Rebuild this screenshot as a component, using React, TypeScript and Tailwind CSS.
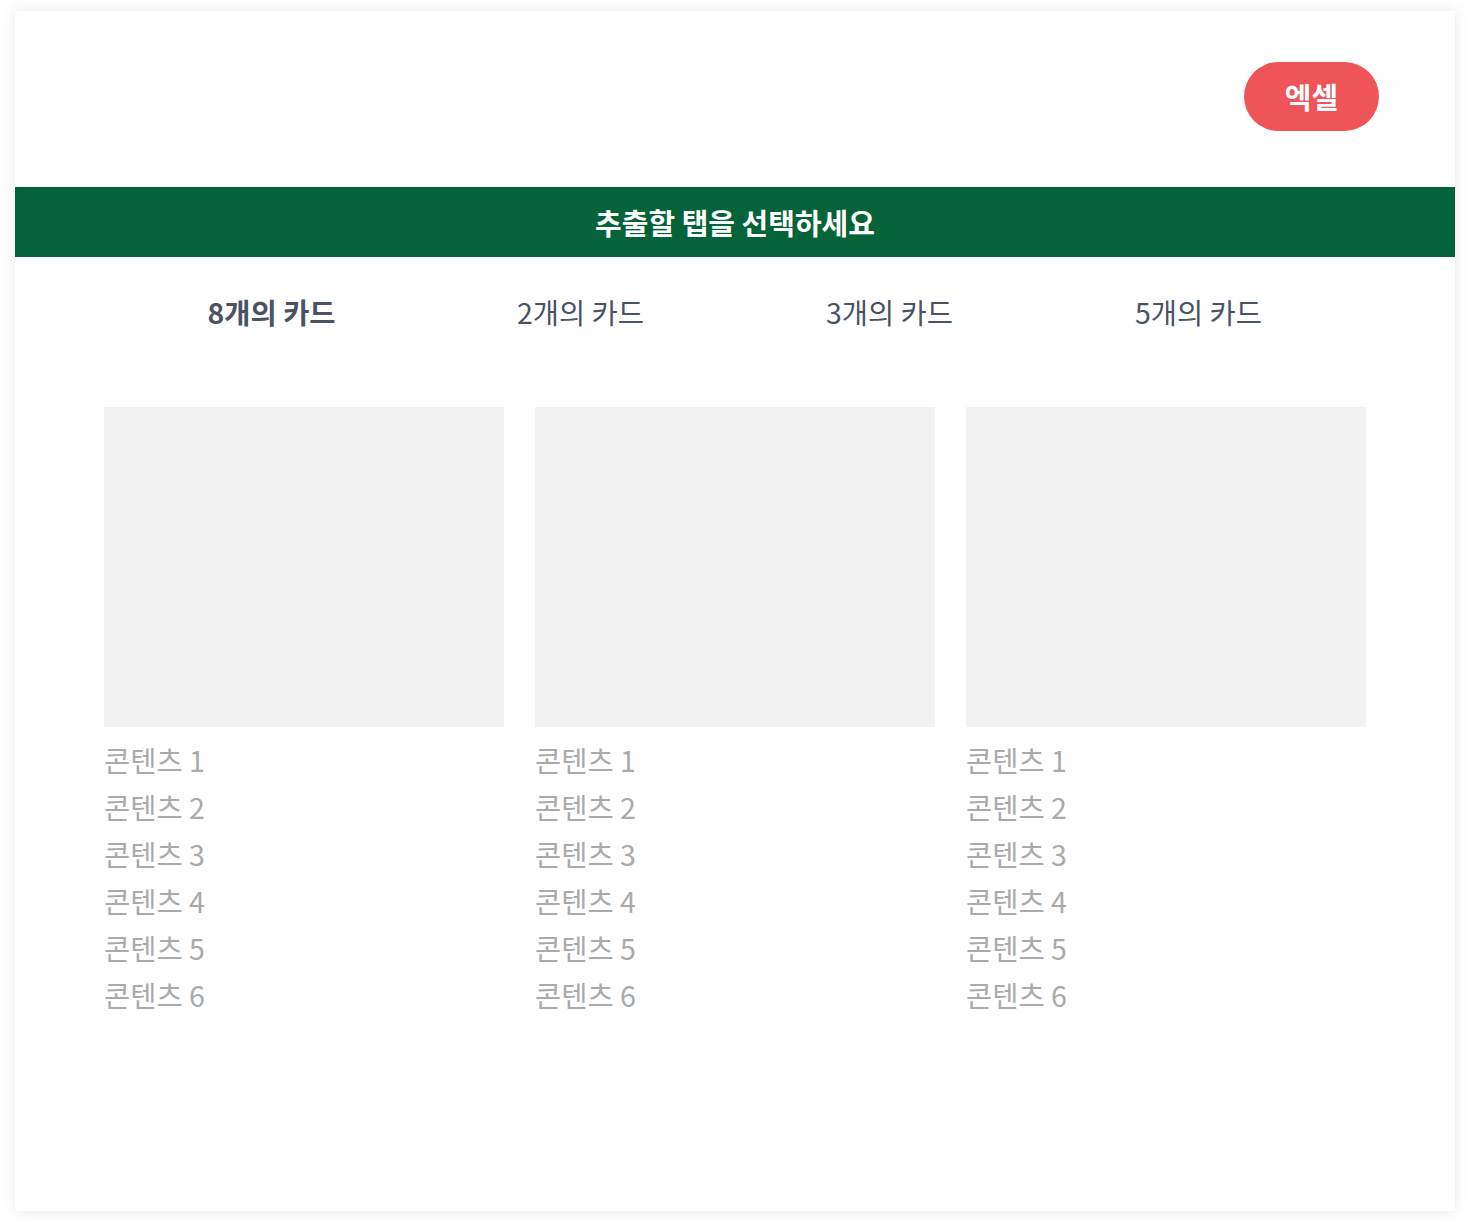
import React, { useState } from "react";

const tabs = ["8개의 카드", "2개의 카드", "3개의 카드", "5개의 카드"];
const cards = [0, 1, 2];
const lines = [1, 2, 3, 4, 5, 6];

export default function App() {
  const [active, setActive] = useState(0);
  return (
    <div
      className="min-h-screen bg-white pl-[15px] pt-[11px]"
      style={{ fontFamily: '"Noto Sans CJK KR", "Noto Sans", sans-serif' }}
    >
      <div className="w-[1440px] h-[1200px] bg-white shadow-[0_0_14px_rgba(0,0,0,0.09)] flex flex-col">
        <div className="h-[176px] flex justify-end items-start pt-[51px] pr-[76px]">
          <button className="w-[135px] h-[69px] rounded-full bg-[#ef5459] text-white text-[29px] font-bold leading-none flex items-center justify-center">
            엑셀
          </button>
        </div>
        <div className="h-[70px] bg-[#05633a] flex items-center justify-center">
          <span className="text-white text-[29px] font-bold leading-none">추출할 탭을 선택하세요</span>
        </div>
        <div className="flex justify-center pt-[35px]">
          <div className="w-[1236px] grid grid-cols-4">
            {tabs.map((t, i) => (
              <button
                key={t}
                onClick={() => setActive(i)}
                className={`h-[40px] leading-[40px] text-[28.5px] text-[#4b5363] text-center ${
                  active === i ? "font-bold" : "font-normal"
                }`}
              >
                {t}
              </button>
            ))}
          </div>
        </div>
        <div className="flex justify-center gap-[31px] mt-[75px]">
          {cards.map((c) => (
            <div key={c} className="w-[400px] flex flex-col">
              <div className="h-[320px] bg-[#f2f2f2]" />
              <div className="mt-[9px] flex flex-col">
                {lines.map((n) => (
                  <div key={n} className="text-[28.5px] leading-[47px] text-[#aaaaaa]">
                    콘텐츠 {n}
                  </div>
                ))}
              </div>
            </div>
          ))}
        </div>
      </div>
    </div>
  );
}
